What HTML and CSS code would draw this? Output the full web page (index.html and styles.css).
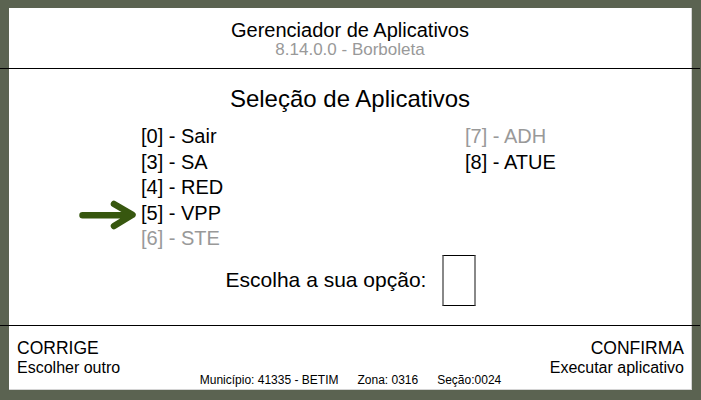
FILE: index.html
```html
<!DOCTYPE html>
<html lang="pt">
<head>
<meta charset="utf-8">
<title>Gerenciador de Aplicativos</title>
<link rel="stylesheet" href="styles.css">
</head>
<body>
<div class="panel">
  <header class="header">
    <div class="title">Gerenciador de Aplicativos</div>
    <div class="version">8.14.0.0 - Borboleta</div>
  </header>
  <div class="rule"></div>
  <main class="main">
    <div class="heading">Seleção de Aplicativos</div>
    <div class="menu">
      <div class="col">
        <div class="item">[0] - Sair</div>
        <div class="item">[3] - SA</div>
        <div class="item">[4] - RED</div>
        <div class="item current">
          <svg class="arrow" width="60" height="30" viewBox="0 0 60 30"><path d="M5.5 15.3 L52 15.3 M37 4 L55.5 14.8 L37 26" fill="none" stroke="#37570f" stroke-width="6.5" stroke-linecap="round" stroke-linejoin="round"/></svg>
          [5] - VPP
        </div>
        <div class="item off">[6] - STE</div>
      </div>
      <div class="col">
        <div class="item off">[7] - ADH</div>
        <div class="item">[8] - ATUE</div>
      </div>
    </div>
    <div class="prompt">
      <span class="prompt-label">Escolha a sua opção:</span>
      <span class="input-box"></span>
    </div>
  </main>
  <div class="rule"></div>
  <footer class="footer">
    <div class="key">
      <div class="key-name">CORRIGE</div>
      <div class="key-desc">Escolher outro</div>
    </div>
    <div class="info">
      <span>Município: 41335 - BETIM</span>
      <span>Zona: 0316</span>
      <span>Seção:0024</span>
    </div>
    <div class="key key-right">
      <div class="key-name">CONFIRMA</div>
      <div class="key-desc">Executar aplicativo</div>
    </div>
  </footer>
</div>
</body>
</html>
```

FILE: styles.css
```css
html, body {
  margin: 0;
  padding: 0;
}
body {
  background: #5b6351;
  width: 701px;
  height: 400px;
  overflow: hidden;
  font-family: "Liberation Sans", Arial, sans-serif;
  color: #000;
}
.panel {
  margin: 8px 9px 0 9px;
  height: 382px;
  background: #fff;
  border-right: 1px solid #d4d4d4;
  border-bottom: 1px solid #d4d4d4;
  box-sizing: border-box;
  display: flex;
  flex-direction: column;
}
.rule {
  height: 1px;
  background: #000;
  margin: 0 -9px;
  flex: none;
}
.header {
  height: 60px;
  box-sizing: border-box;
  padding-top: 11px;
  text-align: center;
  flex: none;
}
.title {
  font-size: 20px;
  line-height: 22px;
}
.version {
  font-size: 17px;
  line-height: 18px;
  color: #999;
}
.main {
  height: 256px;
  box-sizing: border-box;
  padding-top: 16px;
  flex: none;
}
.heading {
  font-size: 24px;
  line-height: 28px;
  text-align: center;
}
.menu {
  margin-top: 11px;
  padding-left: 132px;
  display: grid;
  grid-template-columns: 324px 1fr;
}
.item {
  font-size: 20px;
  line-height: 25.5px;
  white-space: nowrap;
}
.item.off {
  color: #999;
}
.current {
  position: relative;
}
.arrow {
  position: absolute;
  left: -64px;
  top: -1px;
}
.prompt {
  margin-top: 3px;
  padding-left: 2px;
  display: flex;
  justify-content: center;
  align-items: center;
  gap: 16px;
}
.prompt-label {
  font-size: 21px;
  line-height: 24px;
}
.input-box {
  width: 30px;
  height: 49px;
  border-top: 1px solid #000;
  border-bottom: 1px solid #000;
  border-left: 2px solid #888;
  border-right: 2px solid #888;
}
.footer {
  flex: 1;
  box-sizing: border-box;
  padding: 12px 7px 0 8px;
  display: grid;
  grid-template-columns: 1fr auto 1fr;
  align-items: start;
}
.key-name {
  font-size: 17.5px;
  line-height: 20px;
}
.key-desc {
  font-size: 16px;
  line-height: 20px;
}
.key-right {
  text-align: right;
}
.info {
  align-self: end;
  padding-bottom: 2px;
  display: flex;
  gap: 19px;
  font-size: 12px;
  line-height: 14px;
}
```
